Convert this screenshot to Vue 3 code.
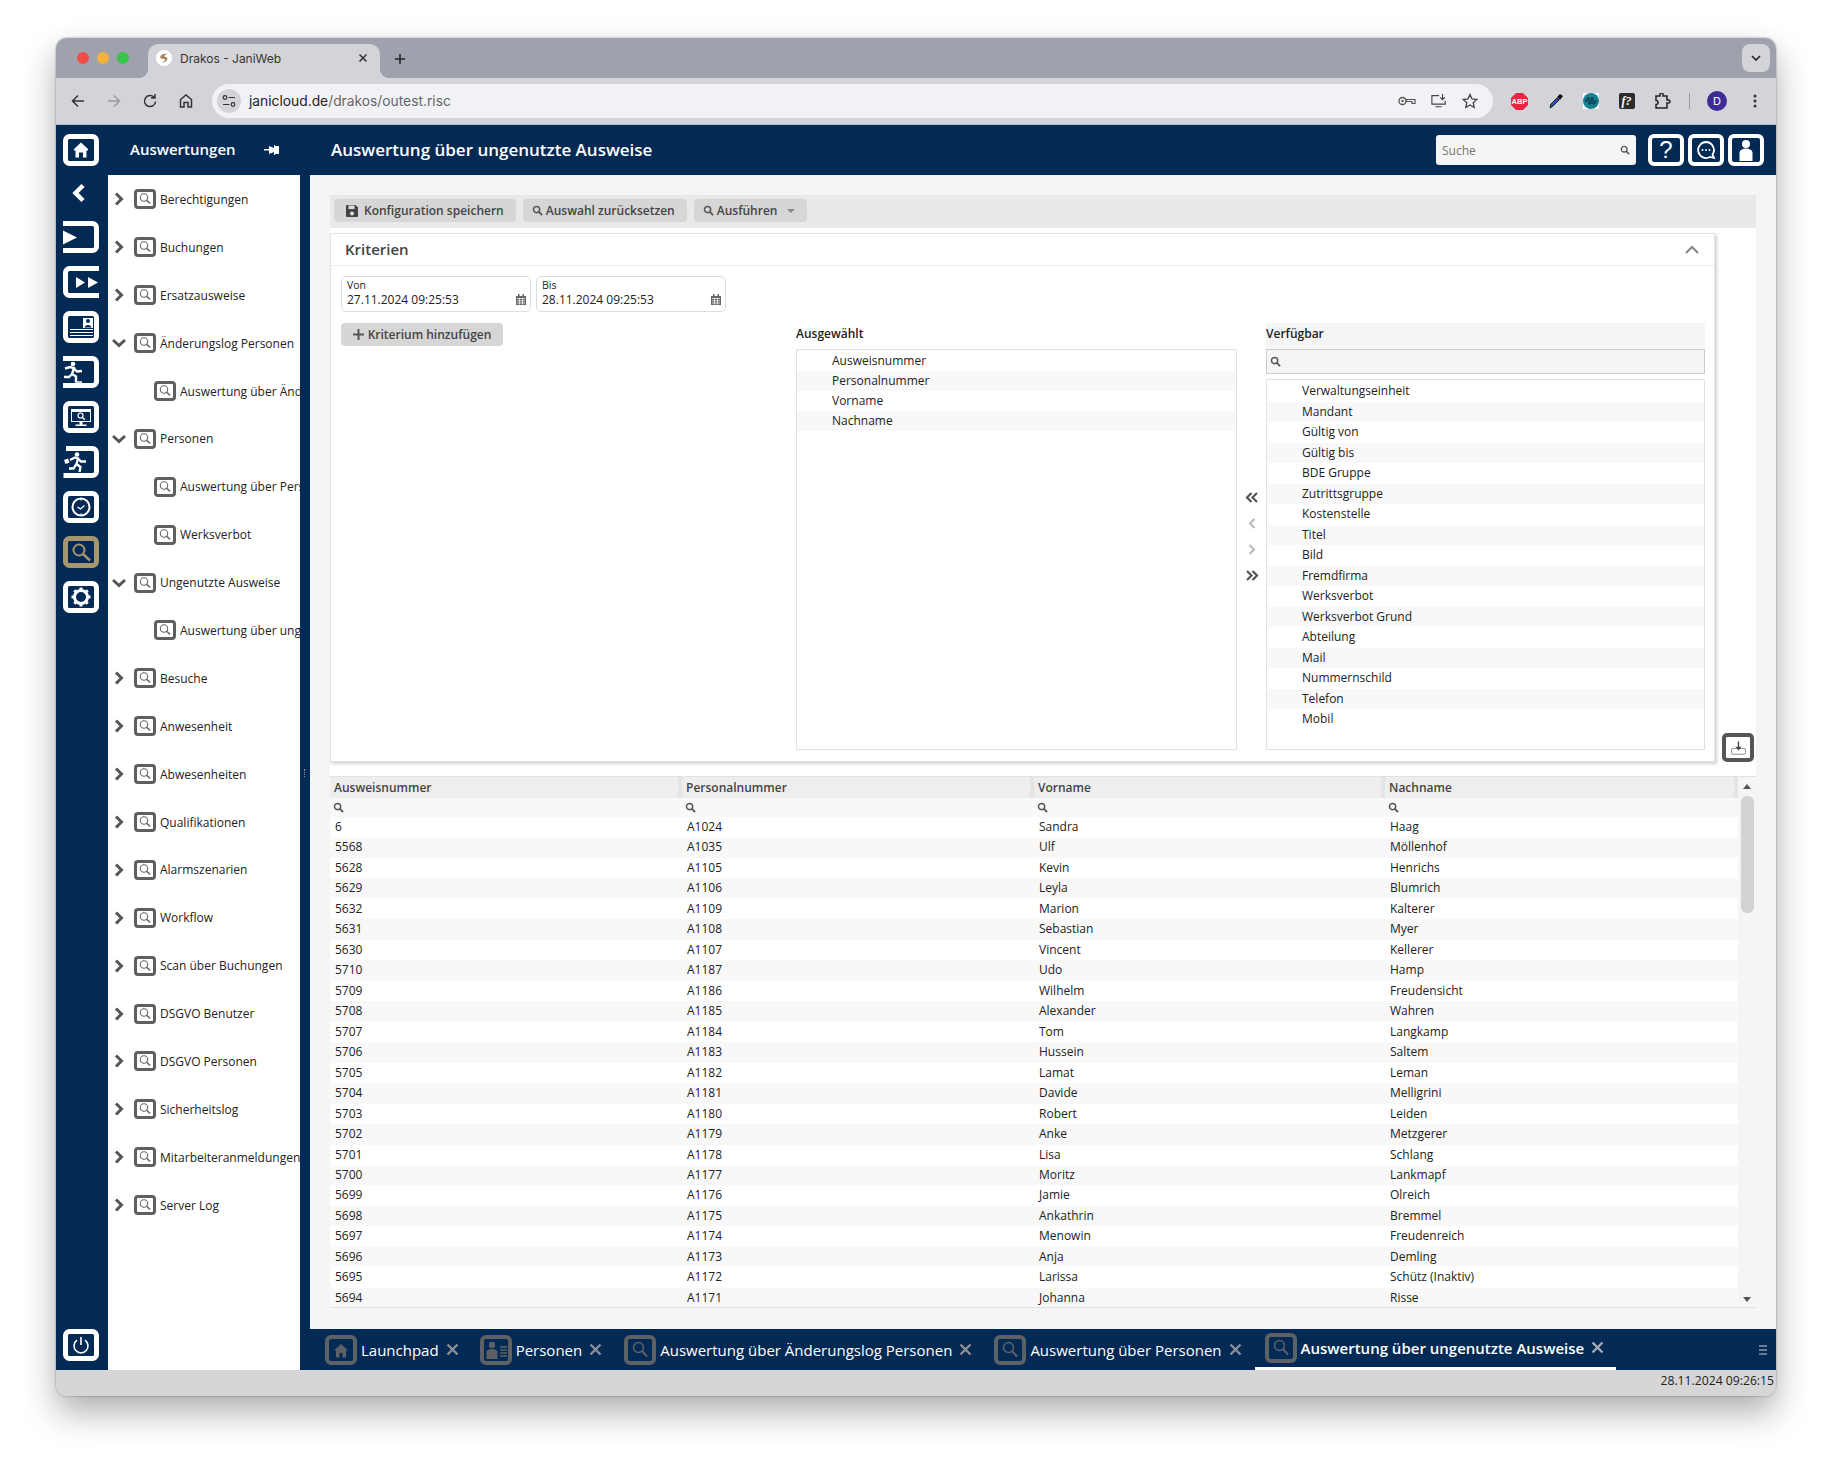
<script setup>
const tree = [
  { label: 'Berechtigungen', state: 'closed' },
  { label: 'Buchungen', state: 'closed' },
  { label: 'Ersatzausweise', state: 'closed' },
  { label: 'Änderungslog Personen', state: 'open' },
  { label: 'Auswertung über Änderungslog Personen', child: true },
  { label: 'Personen', state: 'open' },
  { label: 'Auswertung über Personen', child: true },
  { label: 'Werksverbot', child: true },
  { label: 'Ungenutzte Ausweise', state: 'open' },
  { label: 'Auswertung über ungenutzte Ausweise', child: true },
  { label: 'Besuche', state: 'closed' },
  { label: 'Anwesenheit', state: 'closed' },
  { label: 'Abwesenheiten', state: 'closed' },
  { label: 'Qualifikationen', state: 'closed' },
  { label: 'Alarmszenarien', state: 'closed' },
  { label: 'Workflow', state: 'closed' },
  { label: 'Scan über Buchungen', state: 'closed' },
  { label: 'DSGVO Benutzer', state: 'closed' },
  { label: 'DSGVO Personen', state: 'closed' },
  { label: 'Sicherheitslog', state: 'closed' },
  { label: 'Mitarbeiteranmeldungen', state: 'closed' },
  { label: 'Server Log', state: 'closed' }
]

const selected = ['Ausweisnummer', 'Personalnummer', 'Vorname', 'Nachname']
const available = [
  'Verwaltungseinheit', 'Mandant', 'Gültig von', 'Gültig bis', 'BDE Gruppe', 'Zutrittsgruppe',
  'Kostenstelle', 'Titel', 'Bild', 'Fremdfirma', 'Werksverbot', 'Werksverbot Grund',
  'Abteilung', 'Mail', 'Nummernschild', 'Telefon', 'Mobil'
]

const rows = [
  ['6', 'A1024', 'Sandra', 'Haag'],
  ['5568', 'A1035', 'Ulf', 'Möllenhof'],
  ['5628', 'A1105', 'Kevin', 'Henrichs'],
  ['5629', 'A1106', 'Leyla', 'Blumrich'],
  ['5632', 'A1109', 'Marion', 'Kalterer'],
  ['5631', 'A1108', 'Sebastian', 'Myer'],
  ['5630', 'A1107', 'Vincent', 'Kellerer'],
  ['5710', 'A1187', 'Udo', 'Hamp'],
  ['5709', 'A1186', 'Wilhelm', 'Freudensicht'],
  ['5708', 'A1185', 'Alexander', 'Wahren'],
  ['5707', 'A1184', 'Tom', 'Langkamp'],
  ['5706', 'A1183', 'Hussein', 'Saltem'],
  ['5705', 'A1182', 'Lamat', 'Leman'],
  ['5704', 'A1181', 'Davide', 'Melligrini'],
  ['5703', 'A1180', 'Robert', 'Leiden'],
  ['5702', 'A1179', 'Anke', 'Metzgerer'],
  ['5701', 'A1178', 'Lisa', 'Schlang'],
  ['5700', 'A1177', 'Moritz', 'Lankmapf'],
  ['5699', 'A1176', 'Jamie', 'Olreich'],
  ['5698', 'A1175', 'Ankathrin', 'Bremmel'],
  ['5697', 'A1174', 'Menowin', 'Freudenreich'],
  ['5696', 'A1173', 'Anja', 'Demling'],
  ['5695', 'A1172', 'Larissa', 'Schütz (Inaktiv)'],
  ['5694', 'A1171', 'Johanna', 'Risse']
]

const columns = ['Ausweisnummer', 'Personalnummer', 'Vorname', 'Nachname']

const railIcons = ['enter', 'forward', 'card', 'run', 'monitor', 'runcase', 'clock', 'search', 'gear']

const bottomTabs = [
  { label: 'Launchpad', icon: 'tab-home' },
  { label: 'Personen', icon: 'tab-person' },
  { label: 'Auswertung über Änderungslog Personen', icon: 'tab-search' },
  { label: 'Auswertung über Personen', icon: 'tab-search' }
]
</script>

<template>
  <svg class="defs" aria-hidden="true">
    <symbol id="r-home" viewBox="0 0 36 32">
      <rect x="2.5" y="2.5" width="31" height="27" rx="4" fill="none" stroke="#fff" stroke-width="5" />
      <path d="M18 8.500l7 6.500v1.500h-1.500v7h-3.500v-5h-4v5h-3.500v-7h-1.500v-1.500z" fill="#fff" />
    </symbol>
    <symbol id="r-enter" viewBox="0 0 36 32">
      <path d="M0 2.500h29.500a4 4 0 0 1 4 4v19a4 4 0 0 1-4 4h-29.500" fill="none" stroke="#fff" stroke-width="5" />
      <path d="M0 9.500l14 7-14 7z" fill="#fff" />
    </symbol>
    <symbol id="r-forward" viewBox="0 0 36 32">
      <path d="M36 2.500h-29.500a4 4 0 0 0-4 4v19a4 4 0 0 0 4 4h29.500" fill="none" stroke="#fff" stroke-width="5" />
      <path d="M13 11l9 5.500-9 5.500zM25 11l10 5.500-10 5.500z" fill="#fff" />
    </symbol>
    <symbol id="r-card" viewBox="0 0 36 32">
      <rect x="2.500" y="2.500" width="31" height="27" rx="4" fill="none" stroke="#fff" stroke-width="5" />
      <path d="M20 7h10v10h-10z" fill="#fff" />
      <circle cx="25" cy="10" r="2" fill="#032a54" />
      <path d="M21.500 16.500c0-3.500 7-3.500 7 0z" fill="#032a54" />
      <path d="M7 18.500h23M7 21.500h23M7 24.500h23" stroke="#fff" stroke-width="1.200" />
    </symbol>
    <symbol id="r-run" viewBox="0 0 36 32">
      <path d="M0 2.500h29.500a4 4 0 0 1 4 4v19a4 4 0 0 1-4 4h-29.500" fill="none" stroke="#fff" stroke-width="5" />
      <circle cx="10" cy="8" r="2.300" fill="#fff" />
      <path d="M2 12.500l5-1.500 4 1-2 6 4 2.500v6M9 18l-3 3H1M11 12.500l3 3 5-.5" fill="none" stroke="#fff" stroke-width="2.400" />
      <path d="M13 26h6" stroke="#fff" stroke-width="1.500" />
    </symbol>
    <symbol id="r-monitor" viewBox="0 0 36 32">
      <rect x="2.500" y="2.500" width="31" height="27" rx="4" fill="none" stroke="#fff" stroke-width="5" />
      <rect x="8.500" y="8.500" width="19" height="12" fill="none" stroke="#fff" />
      <path d="M8 10h20" stroke="#fff" stroke-width="2" />
      <path d="M16.500 21v2.500h-4v1.500h11v-1.500h-4v-2.500z" fill="#fff" />
      <circle cx="17.500" cy="14.500" r="2.500" fill="none" stroke="#fff" stroke-width="1.200" />
      <path d="M19.300 16.300l2.500 2.500" stroke="#fff" stroke-width="1.400" />
    </symbol>
    <symbol id="r-runcase" viewBox="0 0 36 32">
      <path d="M3 2.500h26.500a4 4 0 0 1 4 4v19a4 4 0 0 1-4 4h-29" fill="none" stroke="#fff" stroke-width="5" />
      <circle cx="14" cy="8.500" r="2.300" fill="#fff" />
      <path d="M7 14l5-2.500 3 1-1.500 5.500 4 3-1 5M13.500 18l-3 4.500H6M15 12.500l3 3 5 0" fill="none" stroke="#fff" stroke-width="2.300" />
      <path d="M1 14l4-1.500 1.500 4-4 1.500z" fill="#fff" />
    </symbol>
    <symbol id="r-clock" viewBox="0 0 36 32">
      <rect x="2.500" y="2.500" width="31" height="27" rx="4" fill="none" stroke="#fff" stroke-width="5" />
      <circle cx="18" cy="16" r="8.500" fill="none" stroke="#fff" stroke-width="2" />
      <path d="M14.500 16l3 2 4-3.500" fill="none" stroke="#fff" stroke-width="1.200" />
      <path d="M18 7.500v2M18 22.500v2" stroke="#fff" stroke-width="1.200" />
    </symbol>
    <symbol id="r-search" viewBox="0 0 36 32">
      <rect x="2.500" y="2.500" width="31" height="27" rx="4" fill="none" stroke="#a5966f" stroke-width="5" />
      <circle cx="16" cy="14" r="5.500" fill="none" stroke="#a5966f" stroke-width="2" />
      <path d="M20 18l7 6.500" stroke="#a5966f" stroke-width="2.400" />
    </symbol>
    <symbol id="r-gear" viewBox="0 0 36 32">
      <rect x="2.500" y="2.500" width="31" height="27" rx="4" fill="none" stroke="#fff" stroke-width="5" />
      <circle cx="18" cy="16" r="6.500" fill="none" stroke="#fff" stroke-width="3" />
      <g stroke="#fff" stroke-width="3">
        <path d="M18 6.500v3M18 22.500v3M8.500 16h3M24.500 16h3M11.300 9.300l2 2M22.700 20.700l2 2M24.700 9.300l-2 2M13.300 20.700l-2 2" />
      </g>
    </symbol>
    <symbol id="r-power" viewBox="0 0 36 32">
      <rect x="2.500" y="2.500" width="31" height="27" rx="4" fill="none" stroke="#fff" stroke-width="5" />
      <path d="M14 11.200a7 7 0 1 0 8 0" fill="none" stroke="#fff" stroke-width="1.600" />
      <path d="M18 8v8" stroke="#fff" stroke-width="1.600" />
    </symbol>
    <symbol id="t-search" viewBox="0 0 22 20">
      <rect x="1.500" y="1.500" width="19" height="17" rx="2.500" fill="#fff" stroke="#5f5f5f" stroke-width="3" />
      <circle cx="10" cy="8.500" r="3.700" fill="none" stroke="#666" stroke-width="1.100" />
      <path d="M12.700 11.200l3.300 3.200" stroke="#666" stroke-width="1.500" />
    </symbol>
    <symbol id="mag" viewBox="0 0 12 12">
      <circle cx="5" cy="5" r="3.400" fill="none" stroke="currentColor" stroke-width="1.600" />
      <path d="M7.500 7.500l3.500 3.500" stroke="currentColor" stroke-width="2" />
    </symbol>
    <symbol id="tab-home" viewBox="0 0 32 30">
      <rect x="2" y="2" width="28" height="26" rx="4" fill="none" stroke="#5d6166" stroke-width="4" />
      <path d="M16 9l7 6.500h-2v7h-3.500v-4.500h-3v4.500h-3.500v-7h-2z" fill="#5d6166" />
    </symbol>
    <symbol id="tab-person" viewBox="0 0 32 30">
      <rect x="2" y="2" width="28" height="26" rx="4" fill="none" stroke="#5d6166" stroke-width="4" />
      <circle cx="12" cy="10" r="3.200" fill="#5d6166" />
      <path d="M6.500 24v-7c0-4 11-4 11 0v7z" fill="#5d6166" />
      <path d="M20 12h7M20 15h7M20 18h7M20 21h7" stroke="#5d6166" stroke-width="1.500" />
    </symbol>
    <symbol id="tab-search" viewBox="0 0 32 30">
      <rect x="2" y="2" width="28" height="26" rx="4" fill="none" stroke="#5d6166" stroke-width="4" />
      <circle cx="14.500" cy="12.500" r="5" fill="none" stroke="#5d6166" stroke-width="1.500" />
      <path d="M18 16l5 5.500" stroke="#5d6166" stroke-width="2" />
    </symbol>
  </svg>

  <div class="page">
    <div class="window">
      <div class="tabstrip">
        <div class="lights"><i class="red"></i><i class="amber"></i><i class="green"></i></div>
        <div class="browser-tab">
          <svg class="favicon" width="16" height="16" viewBox="0 0 16 16">
            <circle cx="8" cy="8" r="8" fill="#fff" />
            <path d="M4 7c1-3 5-4 8-3-3 0-4 2-3 3 2 0 3 1 2 3-1 2-4 3-5 2 2 0 3-1 3-3-2 0-4 0-5-2z" fill="#a5845a" />
          </svg>
          <span class="tab-title">Drakos - JaniWeb</span>
          <svg width="10" height="10" viewBox="0 0 10 10"><path d="M1.500 1.500l7 7M8.500 1.500l-7 7" stroke="#333" stroke-width="1.500" /></svg>
        </div>
        <svg class="new-tab" width="12" height="12" viewBox="0 0 12 12"><path d="M6 1v10M1 6h10" stroke="#222" stroke-width="1.500" /></svg>
        <div class="tab-menu">
          <svg width="10" height="7" viewBox="0 0 10 7"><path d="M1 1l4 4 4-4" fill="none" stroke="#222" stroke-width="1.600" /></svg>
        </div>
      </div>

      <div class="toolbar">
        <svg class="nav first" width="16" height="16" viewBox="0 0 16 16"><path d="M14 8H2.500M8 2.500L2.500 8 8 13.500" fill="none" stroke="#333" stroke-width="1.500" /></svg>
        <svg class="nav" width="16" height="16" viewBox="0 0 16 16"><path d="M2 8h11.500M8 2.500L13.500 8 8 13.500" fill="none" stroke="#9a9ba1" stroke-width="1.500" /></svg>
        <svg class="nav" width="16" height="16" viewBox="0 0 16 16"><path d="M13.500 8.500a5.500 5.500 0 1 1-1.500-4.200M13 1v4h-4" fill="none" stroke="#333" stroke-width="1.500" /></svg>
        <svg class="nav" width="16" height="16" viewBox="0 0 16 16"><path d="M2.500 14V6.500L8 2l5.500 4.500V14h-3.500V9.500H6V14z" fill="none" stroke="#333" stroke-width="1.500" /></svg>
        <div class="address">
          <span class="chip">
            <svg width="14" height="12" viewBox="0 0 14 12"><circle cx="3" cy="2.500" r="1.800" fill="none" stroke="#333" stroke-width="1.200" /><path d="M6.500 2.500H13M1 9.500h6.500" stroke="#333" stroke-width="1.200" /><circle cx="11" cy="9.500" r="1.800" fill="none" stroke="#333" stroke-width="1.200" /></svg>
          </span>
          <span class="url"><b>janicloud.de</b>/drakos/outest.risc</span>
          <span class="spacer"></span>
          <svg width="18" height="12" viewBox="0 0 18 12"><circle cx="4.500" cy="6" r="3.500" fill="none" stroke="#555" stroke-width="1.300" /><circle cx="4.500" cy="6" r="1.200" fill="#555" /><path d="M8 4.500h9v4h-3v-2h-6z" fill="none" stroke="#555" stroke-width="1.200" /></svg>
          <svg width="16" height="16" viewBox="0 0 18 16"><path d="M9 2H1v9.500h15V8M5 14.500h7" fill="none" stroke="#444" stroke-width="1.300" /><path d="M13 0v6M10.500 4l2.500 2.500L15.500 4" fill="none" stroke="#444" stroke-width="1.300" /></svg>
          <svg width="16" height="16" viewBox="0 0 16 16"><path d="M8 1.500l2 4.500 4.800.500-3.600 3.200 1 4.800L8 12l-4.200 2.500 1-4.800L1.200 6.500 6 6z" fill="none" stroke="#444" stroke-width="1.300" /></svg>
        </div>
        <div class="extensions">
          <svg width="17" height="17" viewBox="0 0 17 17"><path d="M5 0h7l5 5v7l-5 5H5l-5-5V5z" fill="#e8263f" /><text x="8.500" y="11" text-anchor="middle" font-size="7.500" font-weight="700" fill="#fff" font-family="Liberation Sans, sans-serif">ABP</text></svg>
          <svg width="16" height="17" viewBox="0 0 16 17"><path d="M2 15l1-4 6-6 2 2-6 6z" fill="#2f55c8" stroke="#111" /><path d="M9 4l3-3 3 2-3 4z" fill="#111" /></svg>
          <svg width="16" height="16" viewBox="0 0 16 16"><rect width="16" height="16" fill="#fff" /><circle cx="8" cy="8" r="8" fill="#15808f" /><path d="M2 8h2v-3h2v6h2V5h2v6h2V8h2" fill="none" stroke="#0b2a3a" /></svg>
          <span class="fx">f?</span>
          <svg width="17" height="16" viewBox="0 0 17 16"><path d="M2 3h4V1.500a1.500 1.500 0 0 1 3 0V3h4v4h1.500a1.500 1.500 0 0 1 0 3H13v5H2v-3.500a2 2 0 0 0 0-4z" fill="none" stroke="#222" stroke-width="1.500" /></svg>
          <i class="sep"></i>
          <span class="avatar">D</span>
          <svg class="dots" width="4" height="14" viewBox="0 0 4 14"><circle cx="2" cy="2" r="1.500" fill="#333" /><circle cx="2" cy="7" r="1.500" fill="#333" /><circle cx="2" cy="12" r="1.500" fill="#333" /></svg>
        </div>
      </div>

      <header class="app-head">
        <svg class="rail-home" width="36" height="32"><use href="#r-home" /></svg>
        <span class="section">Auswertungen</span>
        <svg class="pin" width="16" height="12" viewBox="0 0 16 12"><path d="M0 5h5V6.500H0zM5 2l5 2V1h1v1h4v8h-4v1h-1V8l-5 2z" fill="#fff" /></svg>
        <h1 class="page-title">Auswertung über ungenutzte Ausweise</h1>
        <div class="global-search">
          <span>Suche</span>
          <svg width="10" height="10" class="gs-icon"><use href="#mag" /></svg>
        </div>
        <div class="head-btn"><span>?</span></div>
        <div class="head-btn">
          <svg width="22" height="20" viewBox="0 0 22 20"><path d="M11 2a8 8 0 1 0 4 15l4 1-1.500-3.500A8 8 0 0 0 11 2z" fill="none" stroke="#fff" stroke-width="1.800" /><circle cx="7.500" cy="10" r="1" fill="#fff" /><circle cx="11" cy="10" r="1" fill="#fff" /><circle cx="14.500" cy="10" r="1" fill="#fff" /></svg>
        </div>
        <div class="head-btn">
          <svg width="16" height="22" viewBox="0 0 16 22"><circle cx="8" cy="5" r="4" fill="#fff" /><path d="M1.500 22v-8c0-6 13-6 13 0v8z" fill="#fff" /></svg>
        </div>
      </header>

      <div class="app-body">
        <nav class="rail">
          <svg class="back" width="14" height="20" viewBox="0 0 14 20"><path d="M11 2.500L3.500 10l7.500 7.500" fill="none" stroke="#fff" stroke-width="4.500" /></svg>
          <svg v-for="icon in railIcons" :key="icon" class="rail-icon" width="36" height="32"><use :href="'#r-' + icon" /></svg>
          <span class="spacer"></span>
          <svg class="rail-power" width="36" height="32"><use href="#r-power" /></svg>
        </nav>

        <aside class="tree">
          <div v-for="item in tree" :key="item.label" class="tree-row" :class="{ child: item.child }">
            <svg v-if="item.state === 'closed'" class="caret" width="14" height="14" viewBox="0 0 14 14"><path d="M4 1.500L9.500 7 4 12.500" fill="none" stroke="#555" stroke-width="3" /></svg>
            <svg v-else-if="item.state === 'open'" class="caret" width="14" height="14" viewBox="0 0 14 14"><path d="M1 4l6 5.500L13 4" fill="none" stroke="#555" stroke-width="3" /></svg>
            <svg class="tree-icon" width="22" height="20"><use href="#t-search" /></svg>
            <span>{{ item.label }}</span>
          </div>
        </aside>

        <div class="splitter"><i></i></div>

        <div class="workspace">
          <main class="content">
            <div class="actions">
              <button class="btn">
                <svg width="14" height="14" viewBox="0 0 14 14"><path d="M1 2a1 1 0 0 1 1-1h8.500L13 3.500V12a1 1 0 0 1-1 1H2a1 1 0 0 1-1-1z" fill="#444" /><path d="M3.500 1.500h6V5h-6z" fill="#ddd" /><circle cx="7" cy="9.500" r="2" fill="#ddd" /></svg>
                Konfiguration speichern
              </button>
              <button class="btn btn-small">
                <svg width="11" height="11"><use href="#mag" /></svg>
                Auswahl zurücksetzen
              </button>
              <button class="btn btn-small">
                <svg width="11" height="11"><use href="#mag" /></svg>
                Ausführen
                <i class="drop"></i>
              </button>
            </div>

            <div class="upper">
              <section class="panel">
                <div class="panel-head">
                  <h2>Kriterien</h2>
                  <svg width="14" height="9" viewBox="0 0 14 9"><path d="M1 8l6-6 6 6" fill="none" stroke="#888" stroke-width="2.200" /></svg>
                </div>
                <div class="panel-body">
                  <div class="filters">
                    <div class="dates">
                      <label class="date" v-for="d in [['Von', '27.11.2024 09:25:53'], ['Bis', '28.11.2024 09:25:53']]" :key="d[0]">
                        <small>{{ d[0] }}</small>
                        <span>{{ d[1] }}</span>
                        <svg class="cal" width="10" height="11" viewBox="0 0 10 11"><path d="M0 2h10v9H0zM2 0h1.500v2H2zM6.500 0H8v2H6.500z" fill="#666" /><path d="M1 4.500h8M1 6.800h8M1 9h8M3.500 4v6.500M6.500 4v6.500" stroke="#fff" stroke-width=".7" /></svg>
                      </label>
                    </div>
                    <button class="btn add">
                      <svg width="11" height="11" viewBox="0 0 11 11"><path d="M5.500 0v11M0 5.500h11" stroke="#555" stroke-width="2" /></svg>
                      Kriterium hinzufügen
                    </button>
                  </div>

                  <div class="picklist">
                    <div class="pick-title plain">Ausgewählt</div>
                    <ul class="pick-box">
                      <li v-for="name in selected" :key="name">{{ name }}</li>
                    </ul>
                  </div>

                  <div class="movers">
                    <svg width="14" height="11" viewBox="0 0 14 11"><path d="M6.500 1L2 5.500 6.500 10M12 1L7.500 5.500 12 10" fill="none" stroke="#555" stroke-width="2.200" /></svg>
                    <svg width="8" height="11" viewBox="0 0 8 11"><path d="M6.500 1L2 5.500 6.500 10" fill="none" stroke="#bbb" stroke-width="2.200" /></svg>
                    <svg width="8" height="11" viewBox="0 0 8 11"><path d="M1.500 1L6 5.500 1.500 10" fill="none" stroke="#bbb" stroke-width="2.200" /></svg>
                    <svg width="14" height="11" viewBox="0 0 14 11"><path d="M2 1l4.500 4.500L2 10M7.500 1L12 5.500 7.500 10" fill="none" stroke="#555" stroke-width="2.200" /></svg>
                  </div>

                  <div class="picklist">
                    <div class="pick-title">Verfügbar</div>
                    <div class="pick-search"><svg width="11" height="11"><use href="#mag" /></svg></div>
                    <ul class="pick-box tall">
                      <li v-for="name in available" :key="name">{{ name }}</li>
                    </ul>
                  </div>
                </div>
              </section>
              <div class="export">
                <svg width="18" height="16" viewBox="0 0 18 16"><rect x=".5" y="8.500" width="17" height="7" rx="2" fill="none" stroke="#777" /><path d="M9 0v9" stroke="#444" stroke-width="1.600" /><path d="M5.500 6.500L9 11l3.500-4.500z" fill="#444" /></svg>
              </div>
            </div>

            <div class="grid">
              <div class="grid-main">
                <div class="grid-row head">
                  <div v-for="c in columns" :key="c">{{ c }}</div>
                </div>
                <div class="grid-row search">
                  <div v-for="c in columns" :key="c"><svg width="11" height="11"><use href="#mag" /></svg></div>
                </div>
                <div v-for="r in rows" :key="r[0]" class="grid-row">
                  <div v-for="(cell, i) in r" :key="i">{{ cell }}</div>
                </div>
              </div>
              <div class="scrollbar">
                <i class="up"></i>
                <i class="thumb"></i>
                <span class="spacer"></span>
                <i class="down"></i>
              </div>
            </div>
          </main>

          <footer class="bottom-tabs">
            <div v-for="t in bottomTabs" :key="t.label" class="b-tab">
              <svg width="32" height="30"><use :href="'#' + t.icon" /></svg>
              <span>{{ t.label }}</span>
              <svg class="b-x" width="13" height="13" viewBox="0 0 13 13"><path d="M1.500 1.500l10 10M11.500 1.500l-10 10" stroke="#8c8f93" stroke-width="2.400" /></svg>
            </div>
            <div class="b-tab active">
              <svg width="32" height="30"><use href="#tab-search" /></svg>
              <span>Auswertung über ungenutzte Ausweise</span>
              <svg class="b-x" width="13" height="13" viewBox="0 0 13 13"><path d="M1.500 1.500l10 10M11.500 1.500l-10 10" stroke="#a8abae" stroke-width="2.400" /></svg>
            </div>
            <span class="spacer"></span>
            <svg class="burger" width="8" height="10" viewBox="0 0 8 10"><path d="M0 1h8M0 5h8M0 9h8" stroke="#8c98a8" stroke-width="1.500" /></svg>
          </footer>
        </div>
      </div>

      <div class="statusbar">28.11.2024 09:26:15</div>
    </div>
  </div>
</template>

<style>
html, body {
  background: #fff;
}
</style>

<style scoped>
.defs {
  display: none;
}

.spacer {
  flex: 1;
}

.page {
  padding: 38px 56px 74px;
  font-family: "Open Sans", "Liberation Sans", sans-serif;
  font-size: 12px;
  color: #222;
}

.window {
  height: 1358px;
  display: flex;
  flex-direction: column;
  border-radius: 11px;
  overflow: hidden;
  box-shadow: 0 0 2px rgba(0, 0, 0, .45), 0 16px 34px rgba(0, 0, 0, .32);
}

/* browser chrome */
.tabstrip {
  height: 40px;
  flex: none;
  display: flex;
  align-items: flex-end;
  background: #9fa2ad;
}

.lights {
  display: flex;
  gap: 8px;
  padding: 0 0 14px 21px;
  width: 92px;
  box-sizing: border-box;
}

.lights i {
  width: 12px;
  height: 12px;
  border-radius: 50%;
}

.red { background: #ef4f4a; }
.amber { background: #f6b13a; }
.green { background: #3cc34a; }

.browser-tab {
  position: relative;
  width: 232px;
  height: 34px;
  box-sizing: border-box;
  padding: 0 12px 6px 8px;
  display: flex;
  align-items: center;
  gap: 8px;
  background: #d3d4da;
  border-radius: 10px 10px 0 0;
  font-family: Inter, "Liberation Sans", sans-serif;
  font-size: 12px;
  color: #333;
}

.browser-tab::before,
.browser-tab::after {
  content: "";
  position: absolute;
  bottom: 0;
  width: 10px;
  height: 10px;
}

.browser-tab::before {
  left: -10px;
  background: radial-gradient(circle at 0 0, transparent 10px, #d3d4da 10.5px);
}

.browser-tab::after {
  right: -10px;
  background: radial-gradient(circle at 100% 0, transparent 10px, #d3d4da 10.5px);
}

.tab-title {
  flex: 1;
}

.new-tab {
  margin: 0 0 13px 14px;
}

.tab-menu {
  width: 28px;
  height: 28px;
  margin: 0 6px 6px auto;
  display: flex;
  align-items: center;
  justify-content: center;
  border-radius: 8px;
  background: #d3d4da;
}

.toolbar {
  height: 47px;
  flex: none;
  box-sizing: border-box;
  display: flex;
  align-items: center;
  background: #d3d4da;
  border-bottom: 1px solid #b5b6bc;
}

.nav {
  margin-left: 20px;
}

.nav.first {
  margin-left: 14px;
}

.address {
  width: 1281px;
  height: 34px;
  margin-left: 18px;
  box-sizing: border-box;
  padding: 0 15px 0 5px;
  display: flex;
  align-items: center;
  gap: 15px;
  border-radius: 17px;
  background: #f1f2f5;
}

.chip {
  width: 24px;
  height: 24px;
  margin-right: -7px;
  display: flex;
  align-items: center;
  justify-content: center;
  border-radius: 50%;
  background: #d3d4da;
}

.url {
  font-family: Inter, "Liberation Sans", sans-serif;
  font-size: 13.800px;
  color: #666;
}

.url b {
  font-weight: 400;
  color: #222;
}

.extensions {
  flex: 1;
  padding-left: 18px;
  display: flex;
  align-items: center;
  gap: 19.500px;
}

.fx {
  width: 16px;
  height: 16px;
  border-radius: 2px;
  background: #2b2b2b;
  color: #fff;
  font: italic 700 12px/16px "Liberation Serif", serif;
  text-align: center;
}

.sep {
  width: 1px;
  height: 16px;
  margin: 0 -2px;
  background: #999;
}

.avatar {
  width: 20px;
  height: 20px;
  border-radius: 50%;
  background: #3f2b96;
  color: #fff;
  font: 11px/20px Inter, sans-serif;
  text-align: center;
}

.dots {
  margin-left: 6px;
}

/* app header */
.app-head {
  height: 50px;
  flex: none;
  box-sizing: border-box;
  padding-right: 12px;
  display: flex;
  align-items: center;
  background: #032a54;
  color: #fff;
}

.rail-home {
  margin-left: 7px;
}

.section {
  margin: 0 0 2px 31px;
  width: 134px;
  font-size: 15px;
  font-weight: 600;
}

.page-title {
  margin: 0 0 2px 51px;
  flex: 1;
  font-size: 17px;
  font-weight: 600;
}

.global-search {
  width: 200px;
  height: 30px;
  box-sizing: border-box;
  padding: 0 6px;
  display: flex;
  align-items: center;
  justify-content: space-between;
  border-radius: 3px;
  background: #f5f5f5;
  color: #777;
}

.gs-icon {
  color: #555;
}

.head-btn {
  width: 36px;
  height: 32px;
  margin-left: 4px;
  box-sizing: border-box;
  display: flex;
  align-items: center;
  justify-content: center;
  border: 4px solid #fff;
  border-radius: 6px;
  font-family: "Liberation Sans", sans-serif;
  font-size: 24px;
}

.global-search + .head-btn {
  margin-left: 12px;
}

/* left side */
.app-body {
  flex: 1;
  min-height: 0;
  display: flex;
}

.rail {
  width: 52px;
  flex: none;
  box-sizing: border-box;
  padding: 8px 0 9px 7px;
  display: flex;
  flex-direction: column;
  background: #032a54;
}

.back {
  margin: 0 0 18px 9px;
}

.rail-icon {
  margin-bottom: 13px;
  flex: none;
}

.tree {
  width: 192px;
  flex: none;
  box-sizing: border-box;
  padding-top: .5px;
  background: #fff;
  overflow: hidden;
}

.tree-row {
  height: 47.900px;
  padding-left: 4px;
  display: flex;
  align-items: center;
  white-space: nowrap;
  color: #222;
}

.tree-row.child {
  padding-left: 46px;
}

.caret {
  width: 14px;
  margin-right: 8px;
  flex: none;
}

.tree-icon {
  margin-right: 4px;
  flex: none;
}

.splitter {
  width: 10px;
  flex: none;
  display: flex;
  align-items: center;
  justify-content: center;
  background: #032a54;
}

.splitter i {
  width: 2px;
  height: 8px;
  border-left: 1px dotted #8c98a8;
}

/* content */
.workspace {
  flex: 1;
  min-width: 0;
  display: flex;
  flex-direction: column;
}

.content {
  flex: 1;
  min-height: 0;
  box-sizing: border-box;
  padding: 20px 20px 21px;
  display: flex;
  flex-direction: column;
  background: #f5f5f5;
}

.actions {
  height: 33px;
  flex: none;
  box-sizing: border-box;
  padding: 4px;
  display: flex;
  gap: 7px;
  background: #e9e9e9;
}

.btn {
  height: 23px;
  padding: 0 12px 0 11px;
  display: inline-flex;
  align-items: center;
  gap: 5px;
  border: 0;
  border-radius: 4px;
  background: #d6d6d6;
  color: #444;
  font-family: "Open Sans", "Liberation Sans", sans-serif;
  font-size: 12px;
  font-weight: 600;
}

.btn-small {
  padding: 0 12px 0 9px;
  gap: 3px;
  color: #444;
}

.btn-small svg {
  color: #555;
}

.drop {
  width: 0;
  height: 0;
  margin-left: 7px;
  border: 4px solid transparent;
  border-top: 4px solid #888;
  border-bottom: 0;
}

.upper {
  height: 548px;
  flex: none;
  box-sizing: border-box;
  padding-top: 5px;
  display: flex;
  background: #fff;
}

.panel {
  width: 1385px;
  height: 529px;
  box-sizing: border-box;
  display: flex;
  flex-direction: column;
  border: 1px solid #e2e2e2;
  box-shadow: 2px 2px 3px rgba(0, 0, 0, .18);
  background: #fff;
}

.panel-head {
  height: 32px;
  flex: none;
  box-sizing: border-box;
  padding: 0 15px 0 14px;
  display: flex;
  align-items: center;
  justify-content: space-between;
  border-bottom: 1px solid #eee;
}

.panel-head h2 {
  margin: 0 0 2px;
  font-size: 15px;
  font-weight: 600;
  color: #444;
}

.panel-body {
  flex: 1;
  min-height: 0;
  padding: 10px 10px 11px;
  display: grid;
  grid-template-columns: 455px 441px 29px 439px;
}

.dates {
  display: flex;
  gap: 5px;
}

.date {
  position: relative;
  width: 190px;
  height: 36px;
  box-sizing: border-box;
  padding: 2px 5px;
  display: flex;
  flex-direction: column;
  border: 1px solid #ddd;
  border-radius: 5px;
  line-height: 16px;
  color: #222;
}

.date small {
  font-size: 10.500px;
  line-height: 13px;
}

.cal {
  position: absolute;
  right: 4px;
  bottom: 6px;
}

.add {
  margin-top: 11px;
  width: 162px;
  gap: 4px;
  justify-content: center;
  padding: 0;
}

.picklist {
  min-height: 0;
  margin-top: 47px;
  display: flex;
  flex-direction: column;
}

.pick-title {
  height: 26px;
  flex: none;
  box-sizing: border-box;
  padding-bottom: 5px;
  display: flex;
  align-items: center;
  background: #f5f5f5;
  font-weight: 600;
  color: #222;
}

.pick-title.plain {
  background: #fff;
}

.pick-search {
  height: 25px;
  flex: none;
  box-sizing: border-box;
  padding: 0 3px;
  display: flex;
  align-items: center;
  border: 1px solid #ccc;
  background: #f5f5f5;
  color: #555;
}

.pick-box {
  flex: 1;
  min-height: 0;
  margin: 0;
  padding: 1px 0 0;
  list-style: none;
  border: 1px solid #e2e2e2;
}

.pick-box.tall {
  margin-top: 5px;
}

.pick-box li {
  height: 20px;
  padding-left: 35px;
  line-height: 20px;
}

.pick-box.tall li {
  height: 20.500px;
  line-height: 20.500px;
}

.pick-box li:nth-child(even) {
  background: #f8f8f8;
}

.movers {
  margin-top: 47px;
  display: flex;
  flex-direction: column;
  align-items: center;
  justify-content: center;
  gap: 15px;
}

.export {
  width: 32px;
  height: 29px;
  margin: 500px 0 0 7px;
  box-sizing: border-box;
  display: flex;
  align-items: center;
  justify-content: center;
  border: 4px solid #555;
  border-radius: 5px;
}

.export svg {
  width: 15px;
  height: 14px;
}

/* table */
.grid {
  flex: 1;
  min-height: 0;
  display: flex;
  overflow: hidden;
  border: solid #e2e2e2;
  border-width: 1px 0 1px 0;
  background: #fff;
}

.grid-main {
  width: 1408px;
  flex: none;
  overflow: hidden;
}

.grid-row {
  height: 20.470px;
  display: grid;
  grid-template-columns: 352px 352px 351px 353px;
  line-height: 20.470px;
  color: #222;
}

.grid-row > div {
  padding-left: 5px;
  overflow: hidden;
}

.grid-row:nth-child(even):not(.search) {
  background: #f8f8f8;
}

.grid-row.head {
  height: 20.500px;
  line-height: 22px;
  background: #eee;
  font-weight: 600;
  color: #444;
}

.grid-row.head > div {
  padding-left: 4px;
  border-right: 4px solid #e4e4e4;
}

.grid-row.search {
  height: 19.500px;
  background: #f8f8f8;
  color: #555;
}

.grid-row.search > div {
  padding-left: 3px;
  display: flex;
  align-items: center;
}

.scrollbar {
  flex: 1;
  display: flex;
  flex-direction: column;
  align-items: center;
  padding: 7px 0 5px;
  background: #f5f5f5;
}

.scrollbar .up,
.scrollbar .down {
  width: 0;
  height: 0;
  border: 4px solid transparent;
}

.scrollbar .up {
  border-bottom: 5px solid #555;
  border-top: 0;
}

.scrollbar .down {
  border-top: 5px solid #555;
  border-bottom: 0;
}

.thumb {
  width: 13px;
  height: 117px;
  margin-top: 7px;
  border-radius: 6px;
  background: #d2d2d2;
}

/* bottom tabs */
.bottom-tabs {
  height: 41px;
  flex: none;
  box-sizing: border-box;
  padding-left: 15px;
  display: flex;
  align-items: stretch;
  background: #032a54;
  color: #fff;
  font-size: 15px;
}

.b-tab {
  margin-right: 22px;
  display: flex;
  align-items: center;
  gap: 4px;
  white-space: nowrap;
}

.b-tab:first-child {
  margin-right: 21px;
}

.b-tab:nth-child(4) {
  margin-right: 13px;
}

.b-x {
  margin-left: 3px;
}

.b-tab.active {
  margin-right: 0;
  padding: 0 12px 1px 10px;
  border-bottom: 3px solid #fff;
  box-sizing: border-box;
  font-weight: 600;
}

.burger {
  align-self: center;
  margin-right: 9px;
}

.statusbar {
  height: 26px;
  flex: none;
  box-sizing: border-box;
  padding: 2px 2px 0 0;
  background: #d6d6d6;
  font-size: 12.200px;
  line-height: 18px;
  text-align: right;
  color: #222;
}
</style>
